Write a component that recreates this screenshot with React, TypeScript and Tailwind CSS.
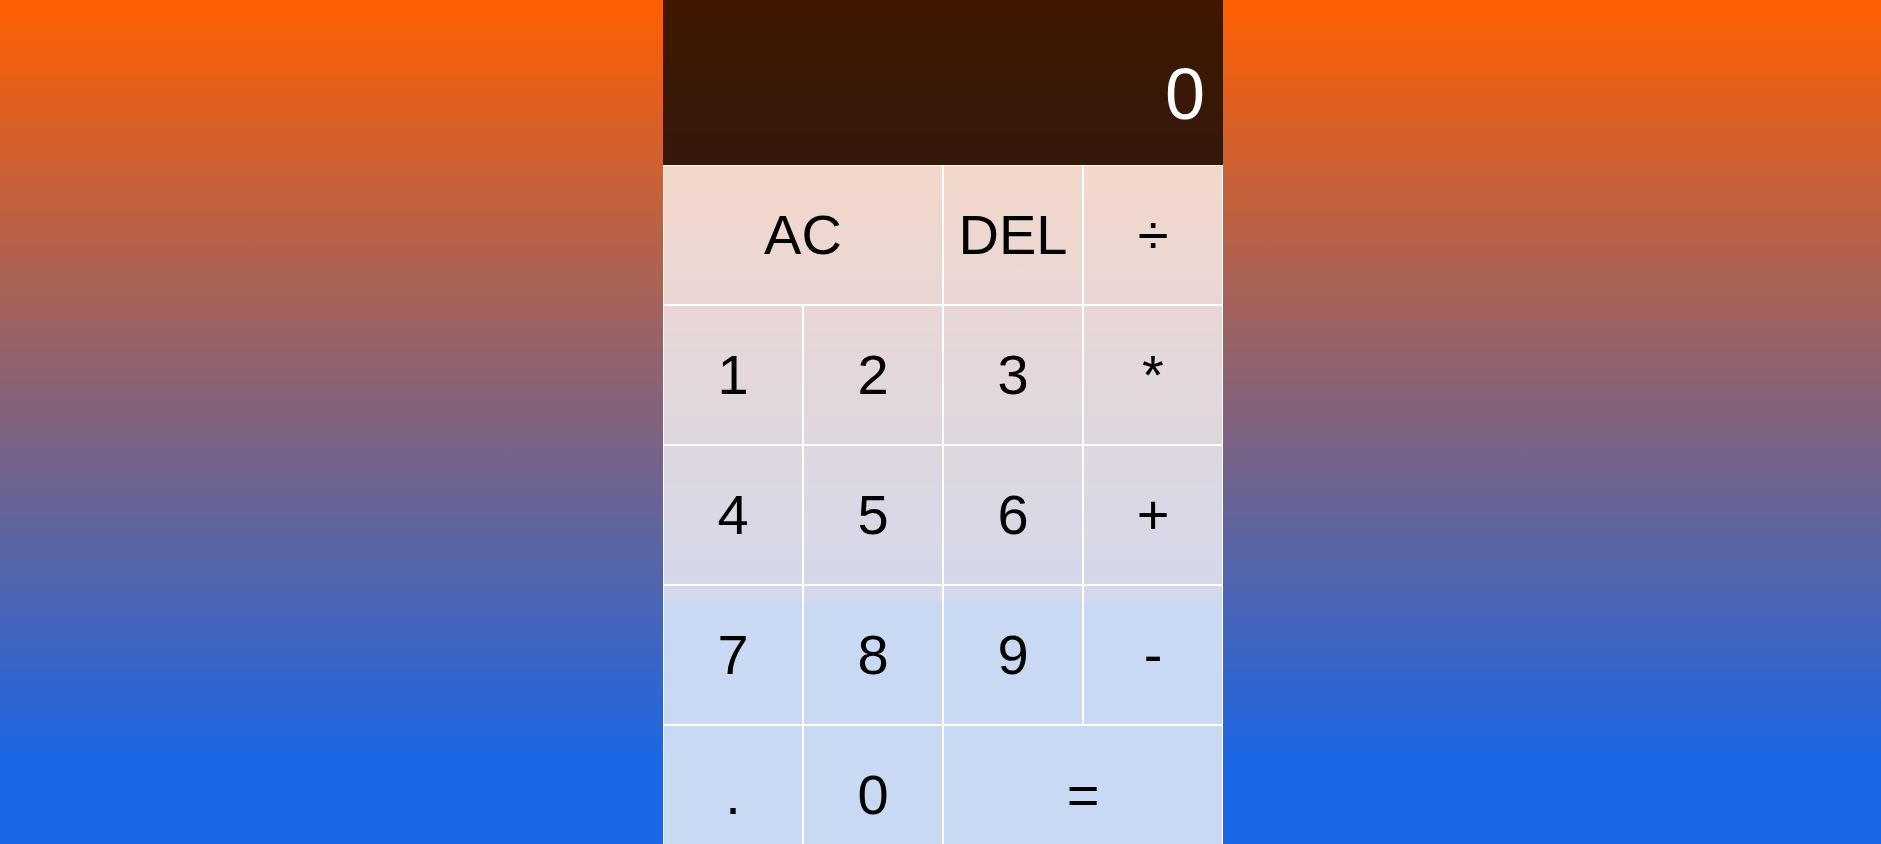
import { useState } from 'react';

const keys: { label: string; wide?: boolean }[] = [
  { label: 'AC', wide: true },
  { label: 'DEL' },
  { label: '÷' },
  { label: '1' },
  { label: '2' },
  { label: '3' },
  { label: '*' },
  { label: '4' },
  { label: '5' },
  { label: '6' },
  { label: '+' },
  { label: '7' },
  { label: '8' },
  { label: '9' },
  { label: '-' },
  { label: '.' },
  { label: '0' },
  { label: '=', wide: true },
];

export default function App() {
  const [current] = useState('0');

  return (
    <div className="h-screen overflow-hidden bg-[linear-gradient(#ff5f00_0px,#1a66e6_762px)] pl-[5px] font-['Liberation_Sans',Arial,sans-serif]">
      <div className="mx-auto grid w-[560px] grid-cols-[repeat(4,140px)] grid-rows-[165px_repeat(5,140px)] bg-[linear-gradient(#ff5f00_0px,#4f63b0_602px,#2a64d0_602px)]">
        <div className="col-span-4 bg-black/75 pr-[18px] pt-[58px] text-right text-[72px] leading-none text-white">
          {current}
        </div>
        {keys.map((k) => (
          <button
            key={k.label}
            type="button"
            className={
              k.wide
                ? 'col-span-2 border border-white bg-white/75 text-[56px] leading-none text-black'
                : 'border border-white bg-white/75 text-[56px] leading-none text-black'
            }
          >
            {k.label}
          </button>
        ))}
      </div>
    </div>
  );
}
